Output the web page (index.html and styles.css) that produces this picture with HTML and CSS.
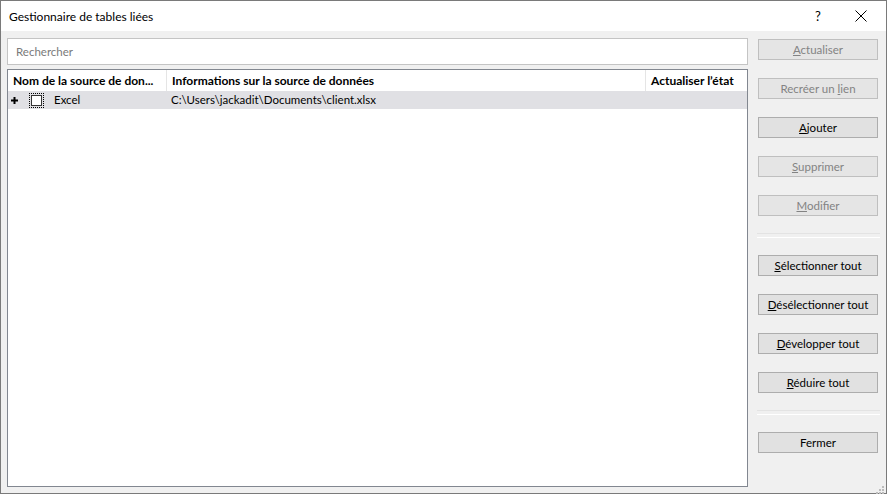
FILE: index.html
```html
<!DOCTYPE html>
<html lang="fr">
<head>
<meta charset="utf-8">
<title>Gestionnaire de tables liées</title>
<link rel="stylesheet" href="styles.css">
</head>
<body>
<div class="window">
  <div class="titlebar">
    <span class="title">Gestionnaire de tables liées</span>
    <span class="tb-help">?</span>
    <span class="tb-close">
      <svg width="12" height="12" viewBox="0 0 12 12"><path d="M0.5 0.5 L11.5 11.5 M11.5 0.5 L0.5 11.5" stroke="#000" stroke-width="1" fill="none"/></svg>
    </span>
  </div>
  <div class="content">
    <div class="main">
      <div class="search">Rechercher</div>
      <div class="table">
        <div class="thead">
          <div class="th c1">Nom de la source de don...</div>
          <div class="th c2">Informations sur la source de données</div>
          <div class="th c3">Actualiser l’état</div>
        </div>
        <div class="row">
          <div class="td c1">
            <svg class="plus" width="7" height="7" viewBox="0 0 7 7"><path d="M0 2.5h7v2H0z M2.5 0h2v7h-2z" fill="#000"/></svg>
            <span class="chk"><span class="box"></span></span>
            <span class="name">Excel</span>
          </div>
          <div class="td c2">C:\Users\jackadit\Documents\client.xlsx</div>
          <div class="td c3"></div>
        </div>
      </div>
    </div>
    <div class="side">
      <div class="btn disabled"><span><u>A</u>ctualiser</span></div>
      <div class="btn disabled"><span>Recréer un <u>l</u>ien</span></div>
      <div class="btn"><span><u>A</u>jouter</span></div>
      <div class="btn disabled"><span><u>S</u>upprimer</span></div>
      <div class="btn disabled"><span><u>M</u>odifier</span></div>
      <div class="sep"></div>
      <div class="btn"><span><u>S</u>électionner tout</span></div>
      <div class="btn"><span><u>D</u>ésélectionner tout</span></div>
      <div class="btn"><span><u>D</u>évelopper tout</span></div>
      <div class="btn"><span><u>R</u>éduire tout</span></div>
      <div class="sep"></div>
      <div class="btn"><span>Fermer</span></div>
    </div>
  </div>
  <div class="grip">
    <svg width="8" height="8" viewBox="0 0 8 8">
      <rect x="6" y="0" width="2" height="2" fill="#bcbcbc"/>
      <rect x="3" y="3" width="2" height="2" fill="#bcbcbc"/>
      <rect x="6" y="3" width="2" height="2" fill="#bcbcbc"/>
      <rect x="0" y="6" width="2" height="2" fill="#bcbcbc"/>
      <rect x="3" y="6" width="2" height="2" fill="#bcbcbc"/>
      <rect x="6" y="6" width="2" height="2" fill="#bcbcbc"/>
    </svg>
  </div>
</div>
</body>
</html>
```

FILE: styles.css
```css
* { box-sizing: border-box; }
html, body { margin: 0; padding: 0; }
body {
  font-family: Lato, "Noto Sans", sans-serif;
  font-size: 11.5px;
  color: #000;
  background: #fff;
}
.window {
  width: 887px;
  height: 494px;
  border: 1px solid #7a7a7a;
  background: #f0f0f0;
  display: flex;
  flex-direction: column;
  position: relative;
}
.titlebar {
  height: 30px;
  background: #fff;
  display: flex;
  align-items: center;
  padding-left: 8px;
  flex: none;
}
.title { font-size: 12px; flex: 1; }
.tb-help { font-size: 13px; width: 16px; margin-right: 29px; text-align: center; }
.tb-close { width: 12px; height: 12px; margin-right: 19px; display: flex; }
.content {
  flex: 1;
  display: flex;
  padding: 7px 7px 6px 6px;
  gap: 10px;
}
.main {
  width: 741px;
  display: flex;
  flex-direction: column;
  gap: 4px;
}
.search {
  height: 27px;
  border: 1px solid #c4c4c4;
  background: #fff;
  color: #7a7a7a;
  padding-left: 8px;
  display: flex;
  align-items: center;
}
.table {
  flex: 1;
  border: 1px solid #828790;
  background: #fff;
}
.thead { display: flex; height: 21px; }
.th {
  font-weight: bold;
  font-size: 12px;
  display: flex;
  align-items: center;
  padding-left: 5px;
  border-right: 1px solid #e5e5e5;
  white-space: nowrap;
}
.c1 { width: 159px; }
.c2 { width: 479px; }
.c3 { width: 99px; border-right: none; }
.row { display: flex; height: 18px; background: #e0e0e4; }
.td { display: flex; align-items: center; padding-left: 4px; padding-bottom: 1px; white-space: nowrap; }
.td.c1 { padding-left: 3px; }
.plus { display: block; margin-right: 11px; margin-top: 1px; }
.chk {
  width: 15px; height: 15px;
  border: 1px dotted #000;
  padding: 1px;
  margin-top: 1px;
  margin-right: 10px;
}
.box { display: block; width: 11px; height: 11px; border: 1px solid #333; background: #fff; }
.side {
  width: 120px;
  display: flex;
  flex-direction: column;
  padding-top: 1px;
}
.btn {
  height: 21px;
  border: 1px solid #adadad;
  background: #e1e1e1;
  display: flex;
  align-items: center;
  justify-content: center;
  margin-bottom: 18px;
  white-space: nowrap;
}
.btn.disabled { color: #838383; border-color: #bfbfbf; background: #e5e5e5; }
.sep {
  height: 5px;
  border-top: 1px solid #e3e3e3;
  border-bottom: 1px solid #fff;
  margin: -1px 0 17px -1px;
  width: 123px;
}
.grip { position: absolute; right: 2px; bottom: 2px; width: 8px; height: 8px; }
```
